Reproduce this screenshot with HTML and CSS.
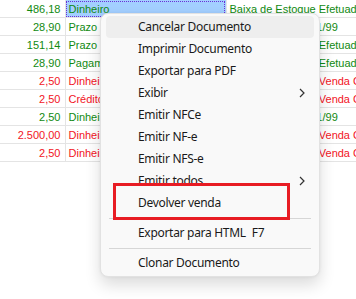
FILE: index.html
```html
<!DOCTYPE html>
<html lang="pt-BR">
<head>
    <meta charset="UTF-8">
    <title>Vendas</title>
    <link rel="stylesheet" href="styles.css">
</head>
<body>

<table class="grid">
    <colgroup>
        <col class="c-valor">
        <col class="c-forma">
        <col class="c-status">
    </colgroup>
    <tr class="ok"><td class="num">486,18</td><td class="sel">Dinheiro</td><td>Baixa de Estoque Efetuada</td></tr>
    <tr class="ok"><td class="num">28,90</td><td>Prazo</td><td>Pedido de Venda 1/99</td></tr>
    <tr class="ok"><td class="num">151,14</td><td>Prazo</td><td>Baixa de Estoque Efetuada</td></tr>
    <tr class="ok"><td class="num">28,90</td><td>Pagamento</td><td>Baixa de Estoque Efetuada</td></tr>
    <tr class="err"><td class="num">2,50</td><td>Dinheiro</td><td>Cancelamento de Venda Cancelada</td></tr>
    <tr class="err"><td class="num">2,50</td><td>Crédito</td><td>Cancelamento de Venda Cancelada</td></tr>
    <tr class="ok"><td class="num">2,50</td><td>Dinheiro</td><td>Pedido de Venda 1/99</td></tr>
    <tr class="err"><td class="num">2.500,00</td><td>Dinheiro</td><td>Cancelamento de Venda Cancelada</td></tr>
    <tr class="err"><td class="num">2,50</td><td>Dinheiro</td><td>Cancelamento de Venda Cancelada</td></tr>
</table>

<div class="context-menu">
    <div class="item hover">Cancelar Documento</div>
    <div class="item">Imprimir Documento</div>
    <div class="item">Exportar para PDF</div>
    <div class="item">Exibir
        <svg class="arrow" width="6" height="10" viewBox="0 0 6 10"><path d="M1 1 L5 5 L1 9" fill="none" stroke="#333" stroke-width="1.2"/></svg>
    </div>
    <div class="item">Emitir NFCe</div>
    <div class="item">Emitir NF-e</div>
    <div class="item">Emitir NFS-e</div>
    <div class="item">Emitir todos
        <svg class="arrow" width="6" height="10" viewBox="0 0 6 10"><path d="M1 1 L5 5 L1 9" fill="none" stroke="#333" stroke-width="1.2"/></svg>
    </div>
    <div class="item">Devolver venda</div>
    <div class="sep"></div>
    <div class="item">Exportar para HTML<span class="key">F7</span></div>
    <div class="sep"></div>
    <div class="item">Clonar Documento</div>
</div>

<div class="mark"></div>

</body>
</html>
```

FILE: styles.css
```css
body {
    margin: 0;
    background: #fff;
    width: 356px;
    height: 299px;
    overflow: hidden;
    position: relative;
}
.grid {
    table-layout: fixed;
    width: 356px;
    border-collapse: collapse;
    font-family: 'Liberation Sans', Arial, sans-serif;
    font-size: 11px;
    white-space: nowrap;
}
.c-valor {
    width: 65px;
}
.c-forma {
    width: 161px;
}
.grid td {
    height: 17px;
    padding: 0 3px;
    border-right: 1px solid #e4e4e4;
    border-bottom: 1px solid #e4e4e4;
    overflow: hidden;
    text-overflow: clip;
}
.grid td.num {
    text-align: right;
    padding-right: 4px;
}
.grid td:nth-child(3) {
    border-right: none;
    padding-right: 0;
}
.grid .ok td {
    color: #118a11;
}
.grid .err td {
    color: #f2141e;
}
.grid td.sel {
    background: #a3cfff;
    outline: 1px dotted #6a2fd6;
    outline-offset: -2px;
}
.context-menu {
    position: absolute;
    left: 100px;
    top: 13px;
    width: 220px;
    box-sizing: border-box;
    padding: 2px 5px;
    background: #f9f9f9;
    border: 1px solid #e2e2e2;
    border-radius: 8px;
    box-shadow: 0 8px 16px rgba(0, 0, 0, 0.14), 0 0 3px rgba(0, 0, 0, 0.06);
    font-family: 'Noto Sans', 'Open Sans', sans-serif;
    font-size: 12px;
    letter-spacing: -0.3px;
    color: #1a1a1a;
}
.context-menu .item {
    height: 22px;
    line-height: 22px;
    padding-left: 32px;
    padding-right: 9px;
    border-radius: 4px;
    display: flex;
    align-items: center;
}
.context-menu .item.hover {
    background: #eeeeee;
}
.context-menu .arrow {
    margin-left: auto;
}
.context-menu .key {
    margin-left: 6px;
}
.context-menu .sep {
    height: 1px;
    background: #d6d6d6;
    margin: 4px 3px 3px;
}
.mark {
    position: absolute;
    left: 113px;
    top: 183px;
    width: 177px;
    height: 37px;
    box-sizing: border-box;
    border: 3px solid #e81c24;
}
```
